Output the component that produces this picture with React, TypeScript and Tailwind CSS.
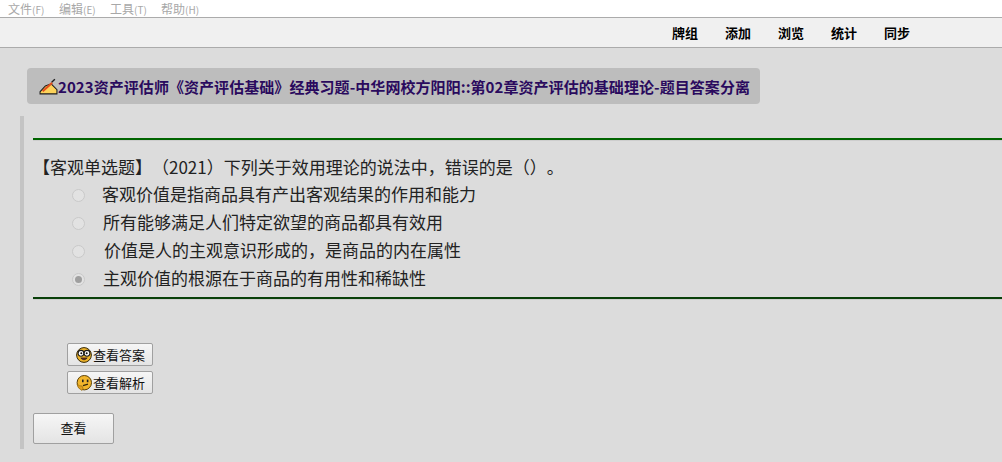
import React from "react";

const font = { fontFamily: '"Noto Sans CJK SC", sans-serif' };

function Radio({ checked }: { checked?: boolean }) {
  return (
    <span className="flex h-[13px] w-[13px] shrink-0 items-center justify-center rounded-full border border-[#c9c9c9] bg-[#e2e2e2]">
      {checked && <span className="h-[7px] w-[7px] rounded-full bg-[#9f9f9f]" />}
    </span>
  );
}

function Option({ text, pad, checked }: { text: string; pad: string; checked?: boolean }) {
  return (
    <div className="flex h-[28px] items-center pl-[39px]">
      <Radio checked={checked} />
      <span className={`${pad} pb-[3px] text-[17px] leading-[25px] text-[#222]`}>{text}</span>
    </div>
  );
}

function Nerd() {
  return (
    <svg width="16" height="16" viewBox="0 0 16 16" className="shrink-0">
      <circle cx="8" cy="8" r="7.4" fill="#efb42a" stroke="#33270a" strokeWidth="1" />
      <circle cx="5" cy="6.3" r="2.9" fill="#fff" stroke="#1c1c1c" strokeWidth="1.1" />
      <circle cx="11" cy="6.3" r="2.9" fill="#fff" stroke="#1c1c1c" strokeWidth="1.1" />
      <circle cx="5.3" cy="6.3" r="1" fill="#111" />
      <circle cx="10.7" cy="6.3" r="1" fill="#111" />
      <path d="M4.8 11 Q8 14.6 11.2 11 Z" fill="#8a2a10" stroke="#222" strokeWidth="0.8" />
    </svg>
  );
}

function Thinking() {
  return (
    <svg width="16" height="16" viewBox="0 0 16 16" className="shrink-0">
      <circle cx="8.3" cy="7.7" r="7.2" fill="#f2b62c" stroke="#5a4008" strokeWidth="1" />
      <rect x="6" y="4.6" width="1.6" height="2.6" fill="#222" />
      <rect x="10.8" y="4.6" width="1.6" height="2.6" fill="#222" />
      <path d="M7 10.6 L12 9.2" stroke="#33270a" strokeWidth="1.2" fill="none" />
      <path d="M1 9 Q1.5 13.5 6 15.5 Q8 13.5 6 11 Q3.5 11.5 1 9 Z" fill="#e2a01e" stroke="#8a6410" strokeWidth="0.6" />
    </svg>
  );
}

function Pencil() {
  return (
    <svg width="19" height="17" viewBox="0 0 18 16" className="shrink-0">
      <path d="M1 15 L1 13 L6 7.5 L11.5 5.5 L17 11 L17 15 Z" fill="#fdd35a" stroke="#1c1c1c" strokeWidth="1" />
      <path d="M3.5 12.5 L12.5 4.5" stroke="#e2501e" strokeWidth="2" />
      <path d="M12 4 L15 1.2" stroke="#1c1c1c" strokeWidth="1.3" />
    </svg>
  );
}

function SmallButton({ icon, text }: { icon: React.ReactNode; text: string }) {
  return (
    <button className="flex h-[23px] w-[86px] items-center rounded-[2px] border border-[#a0a0a0] bg-gradient-to-b from-[#f6f6f6] to-[#e4e4e4] pl-[8px] text-[13px] leading-none text-[#111]">
      {icon}
      <span className="pb-[1px] pl-[1px]">{text}</span>
    </button>
  );
}

function Menu({ label, keyName }: { label: string; keyName: string }) {
  return (
    <span className="w-[35px] whitespace-nowrap">
      {label}
      <span className="text-[10px]">{keyName}</span>
    </span>
  );
}

export default function App() {
  return (
    <div className="flex h-[462px] w-[1002px] flex-col overflow-hidden bg-[#dcdcdc] [text-spacing-trim:space-all]" style={font}>
      <div className="flex h-[18px] items-center gap-[16px] border-b border-[#ababab] bg-white pl-[8px] text-[12px] leading-none text-[#a8a8a8]">
        <Menu label="文件" keyName="(F)" />
        <Menu label="编辑" keyName="(E)" />
        <Menu label="工具" keyName="(T)" />
        <Menu label="帮助" keyName="(H)" />
      </div>
      <div className="flex h-[30px] items-center gap-[27px] border-b border-[#ababab] bg-[#f0f0f0] pl-[672px] text-[13px] font-bold leading-none text-black">
        <span>牌组</span>
        <span>添加</span>
        <span>浏览</span>
        <span>统计</span>
        <span>同步</span>
      </div>
      <div className="pl-[27px] pt-[20px]">
        <div className="flex h-[36px] w-[733px] items-center rounded-[4px] bg-[#bdbdbd] pl-[12px] text-[15px] font-bold leading-none tracking-[0.06px] text-[#2a0a5e]">
          <Pencil />
          <span className="whitespace-nowrap">2023资产评估师《资产评估基础》经典习题-中华网校方阳阳::第02章资产评估的基础理论-题目答案分离</span>
        </div>
      </div>
      <div className="ml-[20px] mt-[12px] flex h-[333px] flex-col border-l-[4px] border-[#c4c4c4] pl-[9px] pt-[22px]">
        <div className="h-[3px] border-t-2 border-[#006400] bg-[#cdcdcd]" />
        <div className="mt-[13px] h-[27px] text-[17px] leading-[25px] text-[#222]">
          【客观单选题】（2021）下列关于效用理论的说法中，错误的是（）。
        </div>
        <Option text="客观价值是指商品具有产出客观结果的作用和能力" pad="pl-[17px]" />
        <Option text="所有能够满足人们特定欲望的商品都具有效用" pad="pl-[18px]" />
        <Option text="价值是人的主观意识形成的，是商品的内在属性" pad="pl-[19px]" />
        <Option text="主观价值的根源在于商品的有用性和稀缺性" pad="pl-[18px]" checked />
        <div className="mt-[4px] h-[3px] border-t-2 border-[#0a400a] bg-[#cdcdcd]" />
        <div className="flex flex-col gap-[5px] pl-[34px] pt-[43px]">
          <SmallButton icon={<Nerd />} text="查看答案" />
          <SmallButton icon={<Thinking />} text="查看解析" />
        </div>
        <button className="mt-[19px] h-[31px] w-[81px] rounded-[2px] border border-[#a0a0a0] bg-gradient-to-b from-[#f6f6f6] to-[#e4e4e4] pb-[2px] text-[13px] leading-none text-[#111]">
          查看
        </button>
      </div>
    </div>
  );
}
